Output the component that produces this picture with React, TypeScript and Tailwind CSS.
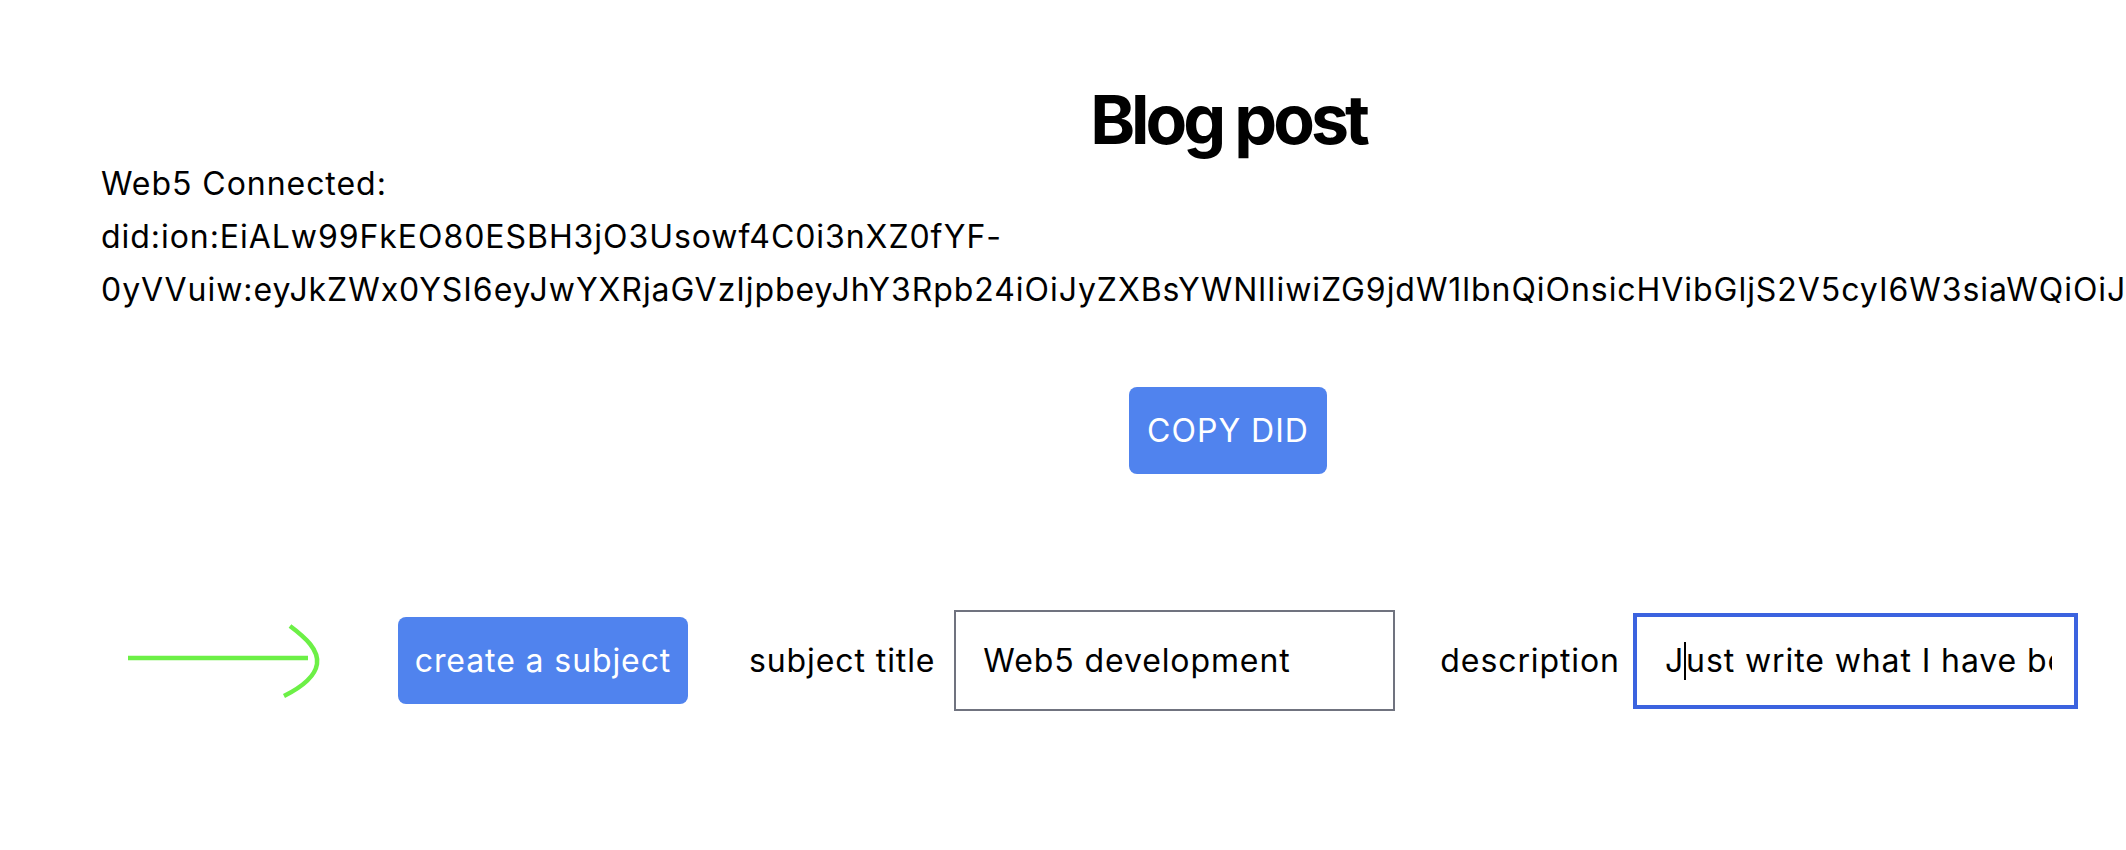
import React from "react";

const DID_A = "did:ion:EiALw99FkEO80ESBH3jO3Usowf4C0i3nXZ0fYF-";
const DID_B =
  "0yVVuiw:eyJkZWx0YSI6eyJwYXRjaGVzIjpbeyJhY3Rpb24iOiJyZXBsYWNlIiwiZG9jdW1lbnQiOnsicHVibGljS2V5cyI6W3siaWQiOiJkd24tc2lnIiwicHVibGljS2V5SndrIjp7ImNydiI6IkVkMjU1MTkiLCJrdHkiOiJPS1AifX1dfX1dfQ";

export default function App() {
  return (
    <div
      className="w-[2356px] bg-white pl-[101px] text-black"
      style={{ fontFamily: "Inter, 'Noto Sans', sans-serif" }}
    >
      <div className="w-[2254px]">
        <h1 className="pt-[79px] text-center text-[68px] font-bold leading-[80px] tracking-[-4px]">
          Blog post
        </h1>
        <div className="mt-[-2px] text-[32px] leading-[53px] tracking-[0.95px]">
          <div>Web5 Connected:</div>
          <div className="whitespace-nowrap">{DID_A}</div>
          <div className="whitespace-nowrap">{DID_B}</div>
        </div>
        <div className="mt-[71px] flex justify-center">
          <button className="h-[87px] w-[198px] rounded-[8px] bg-[#5083ee] text-[32px] tracking-[1px] text-white">
            COPY DID
          </button>
        </div>
        <div className="mt-[136px] flex items-center text-[32px] tracking-[0.9px]">
          <svg
            width="196"
            height="84"
            viewBox="0 0 196 84"
            className="ml-[25px] shrink-0"
            fill="none"
            stroke="#6cf046"
            strokeWidth="4.5"
          >
            <line x1="2" y1="39" x2="182" y2="39" />
            <path d="M164 7 C 180 19, 193 31, 191 45 C 189 58, 176 68, 158 77" />
          </svg>
          <button className="ml-[76px] h-[87px] w-[290px] shrink-0 rounded-[8px] bg-[#5083ee] text-white">
            create a subject
          </button>
          <span className="ml-[61px] shrink-0">subject title</span>
          <div className="ml-[19px] flex h-[101px] w-[441px] shrink-0 items-center border-2 border-[#70737f] pl-[27px]">
            Web5 development
          </div>
          <span className="ml-[45px] shrink-0">description</span>
          <div className="ml-[13px] flex h-[96px] w-[445px] shrink-0 items-center border-4 border-[#3b63df] pl-[28px] pr-[22px]">
            <div className="flex min-w-0 flex-1 items-center overflow-hidden whitespace-nowrap">
              <span>J</span>
              <span className="inline-block h-[38px] w-[2px] shrink-0 bg-black" />
              <span>ust write what I have been doing</span>
            </div>
          </div>
        </div>
      </div>
    </div>
  );
}
